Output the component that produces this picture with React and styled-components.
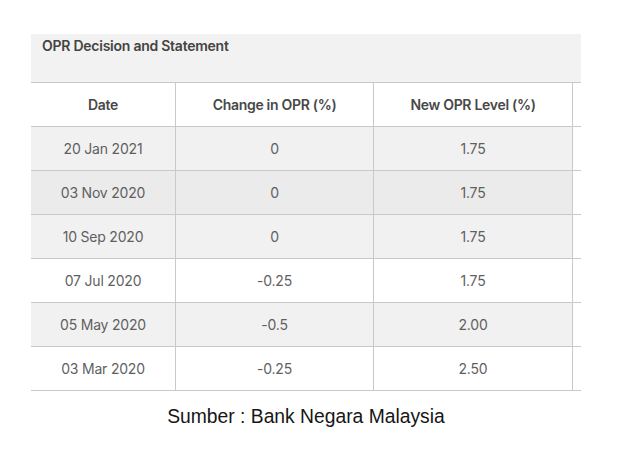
import styled, { createGlobalStyle } from 'styled-components';

const rows = [
  { date: '20 Jan 2021', change: '0', level: '1.75', tone: 'light' },
  { date: '03 Nov 2020', change: '0', level: '1.75', tone: 'dark' },
  { date: '10 Sep 2020', change: '0', level: '1.75', tone: 'light' },
  { date: '07 Jul 2020', change: '-0.25', level: '1.75', tone: 'white' },
  { date: '05 May 2020', change: '-0.5', level: '2.00', tone: 'light' },
  { date: '03 Mar 2020', change: '-0.25', level: '2.50', tone: 'white' },
];

const tones = { white: '#ffffff', light: '#f1f1f1', dark: '#ebebeb' };

function App() {
  return (
    <Page>
      <GlobalStyle />
      <Table>
        <Caption>OPR Decision and Statement</Caption>
        <Row>
          <HeadCell>Date</HeadCell>
          <HeadCell>Change in OPR (%)</HeadCell>
          <HeadCell>New OPR Level (%)</HeadCell>
          <Spare />
        </Row>
        {rows.map(r => (
          <Row key={r.date} tone={r.tone}>
            <Cell>{r.date}</Cell>
            <Cell>{r.change}</Cell>
            <Cell>{r.level}</Cell>
            <Spare />
          </Row>
        ))}
      </Table>
      <Source>Sumber : Bank Negara Malaysia</Source>
    </Page>
  );
}

export default App;

const GlobalStyle = createGlobalStyle`
  body {
    margin: 0;
    background: #ffffff;
  }
`;

const Page = styled.div`
  width: 625px;
  height: 459px;
  padding: 34px 0 0 31px;
  box-sizing: border-box;
  font-family: Inter, "Noto Sans", sans-serif;
`;

const Table = styled.div`
  width: 550px;
`;

const Caption = styled.div`
  height: 49px;
  box-sizing: border-box;
  padding: 3px 11px 0;
  background: #f2f2f2;
  border-bottom: 1px solid #c9c9c9;
  color: #444;
  font-size: 14px;
  font-weight: 600;
  letter-spacing: -0.25px;
`;

const Row = styled.div`
  display: grid;
  grid-template-columns: 144px 198px 199px 9px;
  height: 44px;
  box-sizing: border-box;
  border-bottom: 1px solid #c9c9c9;
  background: ${p => tones[p.tone] || '#ffffff'};
`;

const Cell = styled.div`
  display: flex;
  align-items: center;
  justify-content: center;
  color: #5f5f5f;
  font-size: 14px;
  letter-spacing: -0.2px;
  & + & {
    border-left: 1px solid #c9c9c9;
  }
`;

const HeadCell = styled(Cell)`
  color: #484848;
  font-weight: 600;
  letter-spacing: -0.3px;
`;

const Spare = styled.div`
  border-left: 1px solid #c9c9c9;
  background: #ffffff;
`;

const Source = styled.div`
  width: 550px;
  margin-top: 15px;
  text-align: center;
  font-family: "Liberation Sans", Arial, sans-serif;
  font-size: 19.3px;
  color: #161616;
`;
